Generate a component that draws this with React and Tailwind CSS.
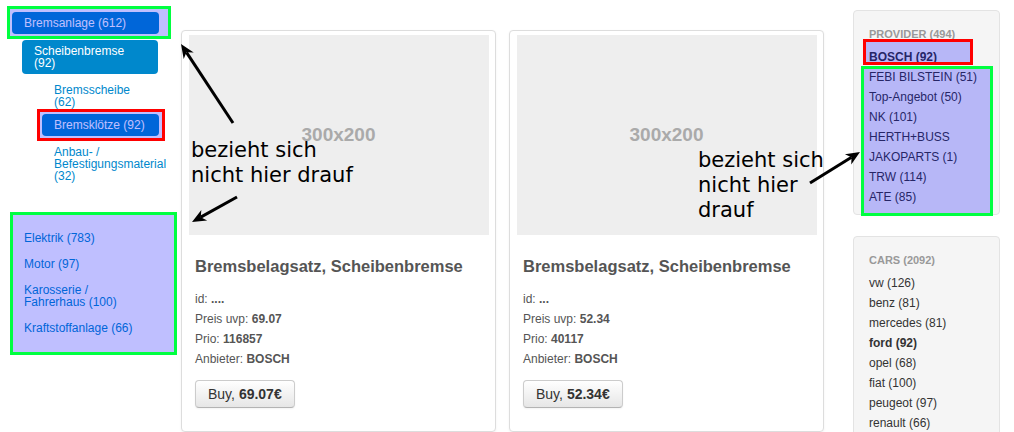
import React from 'react';

// annotation box laid over the UI (blue tint + coloured frame)
function Mark({ className }) {
  return <div className={`pointer-events-none absolute border-[3px] bg-[#0000ff]/25 ${className}`} />;
}

function Arrow({ x1, y1, x2, y2 }) {
  const dx = x2 - x1;
  const dy = y2 - y1;
  const len = Math.hypot(dx, dy);
  const ux = dx / len;
  const uy = dy / len;
  const px = -uy;
  const py = ux;
  const L = 14;
  const W = 6;
  const N = 10;
  const bx = x2 - ux * L;
  const by = y2 - uy * L;
  const nx = x2 - ux * N;
  const ny = y2 - uy * N;
  const pts = [
    [x2, y2],
    [bx + px * W, by + py * W],
    [nx, ny],
    [bx - px * W, by - py * W],
  ].map((p) => p.join(',')).join(' ');
  return (
    <g>
      <line x1={x1} y1={y1} x2={nx} y2={ny} stroke="#000" strokeWidth="3" />
      <polygon points={pts} fill="#000" />
    </g>
  );
}

const products = [
  { id: '....', price: '69.07', prio: '116857' },
  { id: '...', price: '52.34', prio: '40117' },
];

const providers = ['FEBI BILSTEIN (51)', 'Top-Angebot (50)', 'NK (101)', 'HERTH+BUSS', 'JAKOPARTS (1)', 'TRW (114)', 'ATE (85)'];
const cars = ['vw (126)', 'benz (81)', 'mercedes (81)', 'ford (92)', 'opel (68)', 'fiat (100)', 'peugeot (97)', 'renault (66)'];
const groups = ['Elektrik (783)', 'Motor (97)', 'Karosserie / Fahrerhaus (100)', 'Kraftstoffanlage (66)'];

function ProductCard({ id, price, prio }) {
  return (
    <div className="w-[315px] shrink-0 rounded-[4px] border border-[#dddddd] bg-white pt-[4px] pb-[20px] shadow-[0_1px_3px_rgba(0,0,0,0.055)]">
      <div className="mx-auto flex h-[200px] w-[300px] items-center justify-center bg-[#eeeeee] text-[19px] font-bold text-[#aaaaaa]">
        300x200
      </div>
      <div className="px-[13px] pt-[21px] text-[#555555]">
        <h4 className="text-[16.5px] font-bold leading-[20px]">Bremsbelagsatz, Scheibenbremse</h4>
        <div className="mt-[13px] text-[12px] leading-[20px]">
          <p>id: <b>{id}</b></p>
          <p>Preis uvp: <b>{price}</b></p>
          <p>Prio: <b>{prio}</b></p>
          <p>Anbieter: <b>BOSCH</b></p>
        </div>
        <button className="mt-[11px] block rounded-[4px] border border-[#cccccc] border-b-[#b3b3b3] bg-linear-to-b from-white to-[#e6e6e6] px-[12px] py-[3px] text-[14px] leading-[20px] text-[#333333] shadow-[0_1px_2px_rgba(0,0,0,0.05)]">
          Buy, <b>{price}€</b>
        </button>
      </div>
    </div>
  );
}

export default function App() {
  return (
    <div className="relative flex h-[432px] w-[1014px] overflow-hidden bg-white font-['Liberation_Sans',Arial,sans-serif]">
      {/* category tree */}
      <div className="w-[181px] shrink-0 pt-[12px] text-[12px] leading-[12px]">
        <div className="relative ml-[12px] w-[147px]">
          <div className="whitespace-nowrap rounded-[4px] bg-[#0088cc] px-[12px] py-[5px] text-white">Bremsanlage (612)</div>
          <Mark className="-left-[5px] -top-[6px] -right-[12px] -bottom-[5px] border-[#00ff40]" />
        </div>
        <div className="ml-[22px] mt-[6px] w-[136px] rounded-[4px] bg-[#0088cc] px-[12px] py-[5px] text-white">Scheibenbremse (92)</div>
        <div className="ml-[42px] mt-[5px] w-[117px] px-[12px] py-[5px] text-[#0088cc]">Bremsscheibe (62)</div>
        <div className="relative ml-[42px] mt-[1px] w-[117px]">
          <div className="whitespace-nowrap rounded-[4px] bg-[#0088cc] px-[12px] py-[5px] text-white">Bremsklötze (92)</div>
          <Mark className="-left-[5px] -top-[5px] -right-[6px] -bottom-[5px] border-[#ff0000]" />
        </div>
        <div className="ml-[42px] mt-[5px] w-[117px] px-[12px] py-[5px] text-[#0088cc]">Anbau- / Befestigungsmaterial (32)</div>

        <div className="relative ml-[12px] mt-[38px] w-[147px] text-[#0088cc]">
          {groups.map((g) => (
            <div key={g} className="px-[12px] py-[7px]">{g}</div>
          ))}
          <Mark className="-left-[2px] -top-[13px] -right-[18px] -bottom-[14px] border-[#00ff40]" />
        </div>
      </div>

      {/* products */}
      <div className="flex shrink-0 gap-[13px] pt-[30px]">
        {products.map((p) => (
          <ProductCard key={p.prio} {...p} />
        ))}
      </div>

      {/* filters */}
      <div className="ml-[29px] w-[147px] shrink-0 pt-[10px] text-[12px] leading-[20px] text-[#333333]">
        <div className="rounded-[4px] border border-[#e3e3e3] bg-[#f5f5f5] pb-[7px] pl-[15px] pt-[13px]">
          <div className="mb-[3px] text-[11px] font-bold uppercase text-[#999999]">Provider (494)</div>
          <div className="relative font-bold">
            BOSCH (92)
            <Mark className="-left-[6px] -top-[8px] bottom-[2px] w-[110px] border-[#ff0000]" />
          </div>
          <div className="relative">
            {providers.map((p) => (
              <div key={p}>{p}</div>
            ))}
            <Mark className="-left-[8px] -top-[1px] -bottom-[9px] right-[6px] border-[#00ff40]" />
          </div>
        </div>

        <div className="mt-[21px] rounded-[4px] border border-[#e3e3e3] bg-[#f5f5f5] pb-[7px] pl-[15px] pt-[13px]">
          <div className="mb-[3px] text-[11px] font-bold uppercase text-[#999999]">Cars (2092)</div>
          {cars.map((c) => (
            <div key={c} className={c.startsWith('ford') ? 'font-bold' : ''}>{c}</div>
          ))}
        </div>
      </div>

      {/* annotations */}
      <div className="pointer-events-none absolute left-[191px] top-[138px] font-['DejaVu_Sans',sans-serif] text-[21px] leading-[25px] text-black">
        bezieht sich<br />nicht hier drauf
      </div>
      <div className="pointer-events-none absolute left-[698px] top-[148px] font-['DejaVu_Sans',sans-serif] text-[21px] leading-[25px] text-black">
        bezieht sich<br />nicht hier<br />drauf
      </div>
      <svg className="pointer-events-none absolute left-0 top-0" width="1014" height="432">
        <Arrow x1={233} y1={123} x2={181} y2={44} />
        <Arrow x1={237} y1={197} x2={192} y2={222} />
        <Arrow x1={810} y1={183} x2={860} y2={152} />
      </svg>
    </div>
  );
}
